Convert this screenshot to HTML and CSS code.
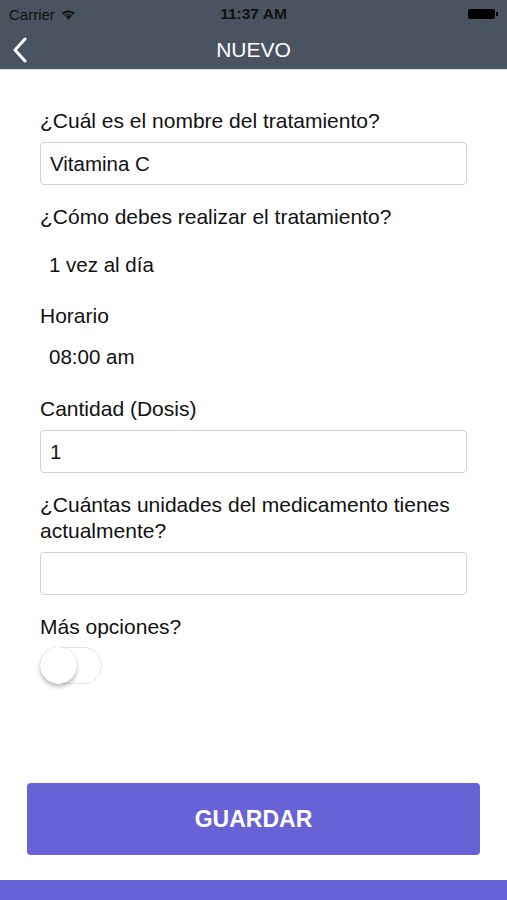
FILE: index.html
```html
<!DOCTYPE html>
<html><head><title>Nuevo tratamiento</title>
<meta charset="utf-8">
<link rel="stylesheet" href="styles.css">
</head>
<body>
<div id="header">
	<div class="statusbar">
		<span class="carrier">Carrier
			<svg class="wifi" width="15" height="11" viewBox="0 0 14 10"><path d="M7 10 L4.6 7.2 A3.6 3.6 0 0 1 9.4 7.2 Z M1 3.6 A8.6 8.6 0 0 1 13 3.6 L11.6 5.2 A6.4 6.4 0 0 0 2.4 5.2 Z M3.2 6 A5.4 5.4 0 0 1 10.8 6 L10 6.9 A4.3 4.3 0 0 0 4 6.9 Z" fill="#111"/></svg>
		</span>
		<span class="clock">11:37 AM</span>
		<span class="battery"><span class="cell"></span><span class="tip"></span></span>
	</div>
	<div class="navbar">
		<svg class="back" width="16" height="26" viewBox="0 0 16 26"><path d="M13 2 L3 13 L13 24" fill="none" stroke="#fff" stroke-width="3" stroke-linecap="round" stroke-linejoin="round"/></svg>
		<span class="title">NUEVO</span>
	</div>
</div>

<div id="content">
	<form name="tratamiento">
		<label class="q">¿Cuál es el nombre del tratamiento?</label>
		<input class="field" type="text" value="Vitamina C">

		<label class="q">¿Cómo debes realizar el tratamiento?</label>
		<div class="value first">1 vez al día</div>

		<label class="q">Horario</label>
		<div class="value">08:00 am</div>

		<label class="q">Cantidad (Dosis)</label>
		<input class="field" type="text" value="1">

		<label class="q">¿Cuántas unidades del medicamento tienes actualmente?</label>
		<input class="field" type="text" value="">

		<label class="q">Más opciones?</label>
		<div class="toggle"><span class="knob"></span></div>

		<button type="button" class="save">GUARDAR</button>
	</form>
</div>

<div id="footer"></div>
</body></html>
```

FILE: styles.css
```css
body { margin: 0;
	font-family: "Liberation Sans", Arial, sans-serif;
	background: #fff;
	color: #111;
	width: 507px;
	height: 900px;
	overflow: hidden;
	display: flex;
	flex-direction: column;
}
#header { background-color: #4a5360; border-bottom: 1px solid #e2e4e8; }
.statusbar {
	height: 28px;
	display: flex;
	align-items: center;
	justify-content: space-between;
	padding: 0 9px;
	font-size: 15px;
	color: #111;
}
.carrier { display: flex; align-items: center; gap: 6px; width: 120px; }
.clock { font-weight: bold; font-size: 15.5px; }
.battery { width: 120px; display: flex; justify-content: flex-end; align-items: center; }
.cell { width: 27px; height: 10px; background: #000; border-radius: 2px; }
.tip { width: 2px; height: 4px; background: #000; margin-left: 1px; }
.navbar {
	height: 41px;
	display: flex;
	align-items: center;
	justify-content: center;
	position: relative;
}
.back { position: absolute; left: 12px; top: 9px; }
.title { color: #fff; font-size: 21px; padding-top: 3px; }

#content { flex: 1; padding: 0 40px 0 40px; }
form { display: flex; flex-direction: column; padding-top: 38px; }
.q { font-size: 21px; line-height: 26px; margin-bottom: 8px; }
.field {
	height: 43px;
	box-sizing: border-box;
	border: 1px solid #d2d2d2;
	border-radius: 4px;
	font-family: inherit;
	font-size: 20.5px;
	color: #111;
	padding: 0 9px;
	margin-bottom: 19px;
}
.value { font-size: 20.5px; line-height: 26px; padding-left: 9px; margin-top: 7px; margin-bottom: 26px; }
.value.first { margin-top: 14px; margin-bottom: 25px; }
.toggle {
	width: 62px;
	height: 37px;
	margin-top: -1px;
	box-sizing: border-box;
	border: 1px solid #e3e3e3;
	border-radius: 19px;
	background: #fff;
	position: relative;
}
.knob {
	position: absolute;
	left: -1px;
	top: -1px;
	width: 37px;
	height: 37px;
	border-radius: 50%;
	background: #fff;
	box-shadow: 0 3px 4px rgba(0,0,0,0.25), 0 0 1px rgba(0,0,0,0.2);
}
.save {
	margin: 99px -13px 0 -13px;
	height: 72px;
	background-color: #6762d6;
	color: #fff;
	border: none;
	border-radius: 4px;
	font-family: inherit;
	font-size: 23px;
	font-weight: bold;
}
#footer { height: 20px; background-color: #6762d6; }
```
